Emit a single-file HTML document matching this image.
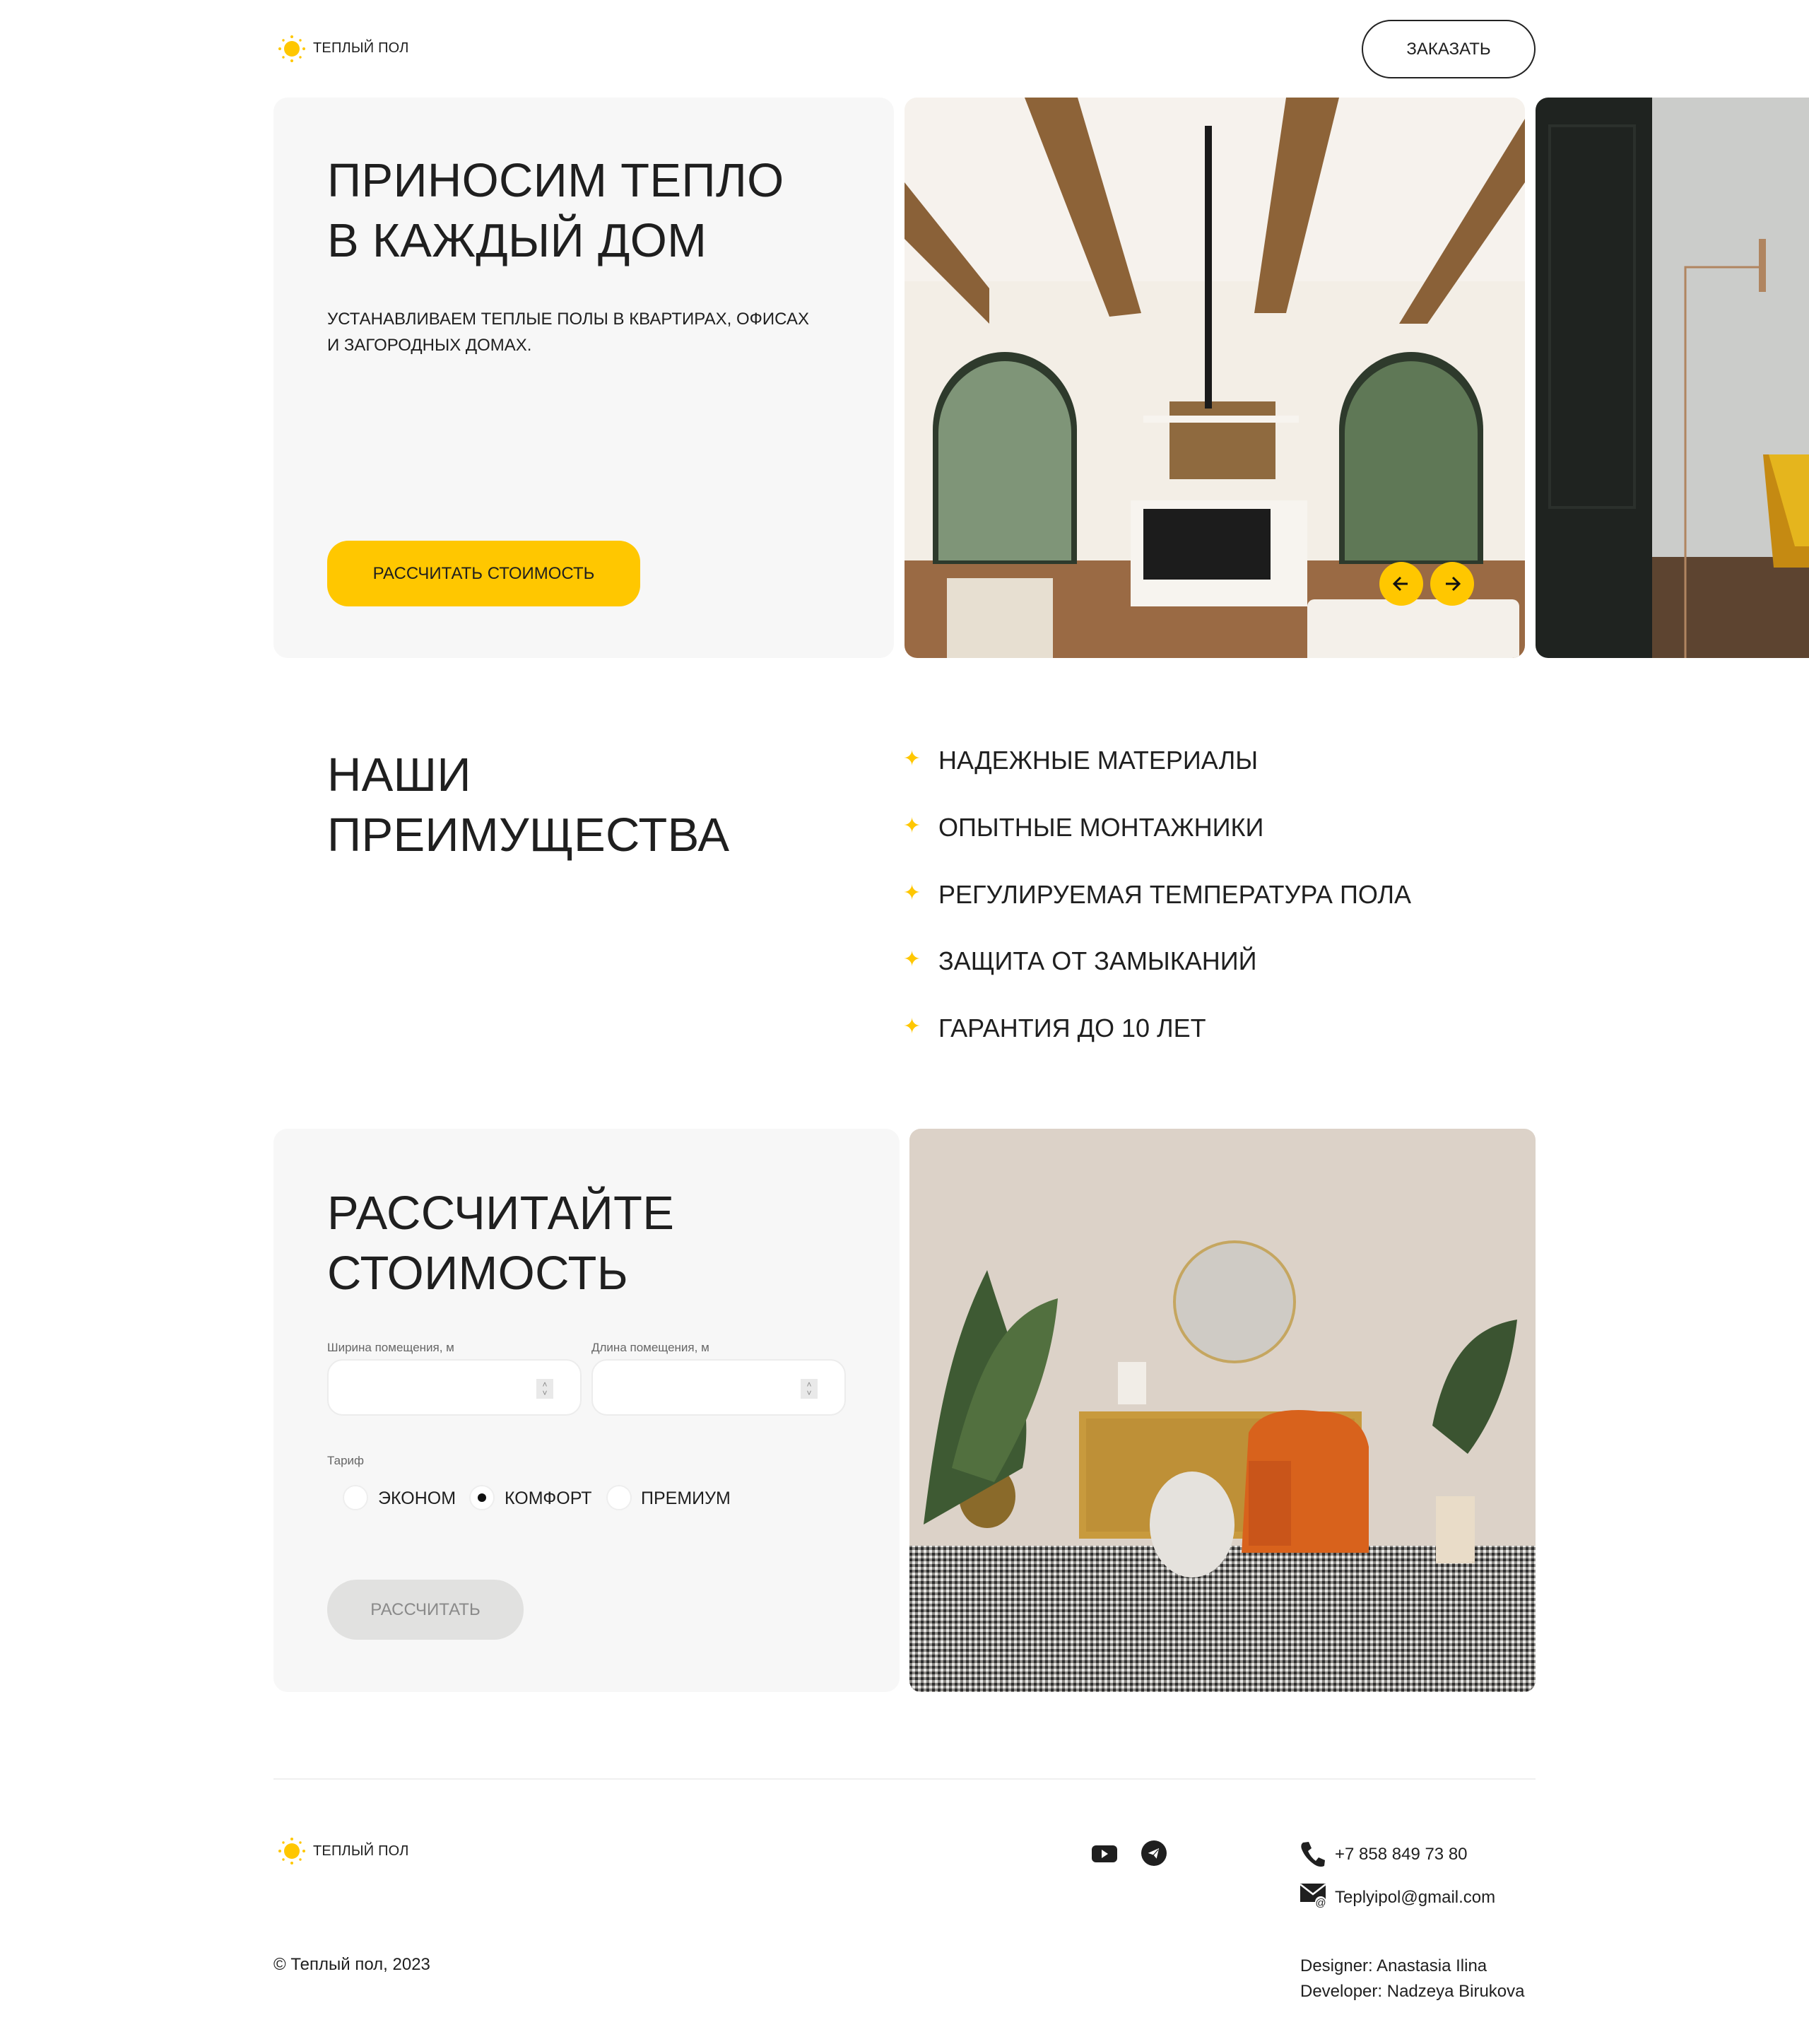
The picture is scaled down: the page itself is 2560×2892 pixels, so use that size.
<!DOCTYPE html>
<html><head><meta charset="utf-8"><style>
*{margin:0;padding:0;box-sizing:border-box}
body{width:2560px;height:2892px;background:#fff;font-family:"Liberation Sans",Arial,sans-serif;color:#1f1f1f;position:relative;overflow:hidden}
.a{position:absolute}
.logo{font-size:20px;letter-spacing:.2px}
h1,h2{font-weight:400;font-size:67px;line-height:85px;letter-spacing:.3px;position:absolute;color:#1f1f1f}
.card{background:#f7f7f7;border-radius:20px}
.li{font-size:36px;letter-spacing:0}
.star{color:#ffc700;font-size:30px}
.lab{font-size:17px;color:#666}
.inp{background:#fff;border:2px solid #ececec;border-radius:22px;width:360px;height:80px}
.spin{position:absolute;right:38px;top:26px;width:24px;height:28px;background:#e9e9e9;font-size:12px;line-height:12px;text-align:center;color:#888;padding-top:2px}
.rad{width:36px;height:36px;border-radius:50%;background:#fff;border:2px solid #eee}
.rt{font-size:25px}
.ft{font-size:24px}
</style></head><body>

<svg class="a" style="left:393px;top:49px" width="40" height="40" viewBox="0 0 40 40"><circle cx="20" cy="20" r="11" fill="#ffc700"/><g fill="#ffc700"><circle cx="20" cy="3" r="2"/><circle cx="20" cy="37" r="2"/><circle cx="3" cy="20" r="2"/><circle cx="37" cy="20" r="2"/><circle cx="8" cy="8" r="1.7"/><circle cx="32" cy="8" r="1.7"/><circle cx="8" cy="32" r="1.7"/><circle cx="32" cy="32" r="1.7"/></g></svg>
<div class="a logo" style="left:443px;top:57px">ТЕПЛЫЙ ПОЛ</div>
<div class="a" style="left:1927px;top:28px;width:246px;height:83px;border:2px solid #222;border-radius:42px;font-size:24px;text-align:center;line-height:79px">ЗАКАЗАТЬ</div>

<div class="a card" style="left:387px;top:138px;width:878px;height:793px"></div>
<h1 style="left:463px;top:213px">ПРИНОСИМ ТЕПЛО<br>В КАЖДЫЙ ДОМ</h1>
<div class="a" style="left:463px;top:433px;font-size:24px;line-height:37px">УСТАНАВЛИВАЕМ ТЕПЛЫЕ ПОЛЫ В КВАРТИРАХ, ОФИСАХ<br>И ЗАГОРОДНЫХ ДОМАХ.</div>
<div class="a" style="left:463px;top:765px;width:443px;height:93px;background:#ffc700;border-radius:30px;font-size:24px;text-align:center;line-height:93px">РАССЧИТАТЬ СТОИМОСТЬ</div>

<svg class="a" style="left:1280px;top:138px;border-radius:18px" width="878" height="793" viewBox="0 0 878 793">
<rect width="878" height="793" fill="#f3eee6"/>
<rect y="0" width="878" height="260" fill="#f6f2ed"/>
<rect y="655" width="878" height="138" fill="#9a6a44"/>
<polygon points="0,120 120,270 120,320 0,200" fill="#8a6138"/>
<polygon points="170,0 245,0 335,305 290,310" fill="#8d6338"/>
<polygon points="540,0 615,0 540,305 495,305" fill="#8d6338"/>
<polygon points="878,30 878,120 740,320 700,320" fill="#8a6138"/>
<path d="M40,660 L40,470 A102,110 0 0 1 244,470 L244,660Z" fill="#2e3a2c"/>
<path d="M48,655 L48,475 A94,102 0 0 1 236,475 L236,655Z" fill="#7f9578"/>
<path d="M615,660 L615,470 A102,110 0 0 1 819,470 L819,660Z" fill="#2e3a2c"/>
<path d="M623,655 L623,475 A94,102 0 0 1 811,475 L811,655Z" fill="#5f7856"/>
<rect x="375" y="430" width="150" height="110" fill="#8f6a3f"/>
<rect x="425" y="40" width="10" height="400" fill="#1a1a1a"/>
<rect x="320" y="570" width="250" height="150" fill="#f7f4ef"/>
<rect x="338" y="450" width="220" height="10" fill="#f7f4ef"/>
<rect x="338" y="582" width="180" height="100" fill="#1c1c1c"/>
<rect x="570" y="710" width="300" height="190" rx="10" fill="#f4f0ea"/>
<rect x="60" y="680" width="150" height="170" fill="#e7dfd1"/>
<rect x="80" y="830" width="560" height="140" fill="#dcd6cc" opacity=".8"/>
<circle cx="703" cy="688" r="31" fill="#ffc700"/><circle cx="775" cy="688" r="31" fill="#ffc700"/>
<path d="M712,688h-18m8,-9l-9,9l9,9" stroke="#111" stroke-width="3" fill="none"/>
<path d="M766,688h18m-8,-9l9,9l-9,9" stroke="#111" stroke-width="3" fill="none"/>
</svg>
<svg class="a" style="left:2173px;top:138px;border-radius:18px 0 0 18px" width="387" height="793" viewBox="0 0 387 793">
<rect width="387" height="793" fill="#cbccca"/>
<rect x="165" y="650" width="222" height="143" fill="#5d4430"/>
<rect width="165" height="793" fill="#1f2320"/>
<rect x="20" y="40" width="120" height="540" fill="none" stroke="#2b302c" stroke-width="4"/>
<path d="M212,810 V240 h110 v-30" stroke="#b08560" stroke-width="3" fill="none"/>
<rect x="316" y="200" width="10" height="75" fill="#b08560"/>
<path d="M322,505 h65 v160 h-50 Z" fill="#c58a12"/>
<path d="M330,505 h57 v130 h-20 Z" fill="#e5b51d"/>
</svg>

<h2 style="left:463px;top:1054px">НАШИ<br>ПРЕИМУЩЕСТВА</h2>
<div class="a star" style="left:1278px;top:1056px">✦</div><div class="a li" style="left:1328px;top:1055px">НАДЕЖНЫЕ МАТЕРИАЛЫ</div>
<div class="a star" style="left:1278px;top:1151px">✦</div><div class="a li" style="left:1328px;top:1150px">ОПЫТНЫЕ МОНТАЖНИКИ</div>
<div class="a star" style="left:1278px;top:1246px">✦</div><div class="a li" style="left:1328px;top:1245px">РЕГУЛИРУЕМАЯ ТЕМПЕРАТУРА ПОЛА</div>
<div class="a star" style="left:1278px;top:1340px">✦</div><div class="a li" style="left:1328px;top:1339px">ЗАЩИТА ОТ ЗАМЫКАНИЙ</div>
<div class="a star" style="left:1278px;top:1435px">✦</div><div class="a li" style="left:1328px;top:1434px">ГАРАНТИЯ ДО 10 ЛЕТ</div>

<div class="a card" style="left:387px;top:1597px;width:886px;height:797px"></div>
<h2 style="left:463px;top:1674px">РАССЧИТАЙТЕ<br>СТОИМОСТЬ</h2>
<div class="a lab" style="left:463px;top:1897px">Ширина помещения, м</div>
<div class="a lab" style="left:837px;top:1897px">Длина помещения, м</div>
<div class="a inp" style="left:463px;top:1923px"><div class="spin">˄<br>˅</div></div>
<div class="a inp" style="left:837px;top:1923px"><div class="spin">˄<br>˅</div></div>
<div class="a lab" style="left:463px;top:2057px">Тариф</div>
<div class="a rad" style="left:485px;top:2101px"></div><div class="a rt" style="left:535px;top:2106px">ЭКОНОМ</div>
<div class="a rad" style="left:664px;top:2101px"><div style="width:12px;height:12px;border-radius:50%;background:#111;margin:10px"></div></div><div class="a rt" style="left:714px;top:2106px">КОМФОРТ</div>
<div class="a rad" style="left:858px;top:2101px"></div><div class="a rt" style="left:907px;top:2106px">ПРЕМИУМ</div>
<div class="a" style="left:463px;top:2235px;width:278px;height:85px;background:#e1e1e0;border-radius:42px;font-size:24px;color:#8a8a8a;text-align:center;line-height:85px">РАССЧИТАТЬ</div>

<svg class="a" style="left:1287px;top:1597px;border-radius:16px" width="886" height="797" viewBox="0 0 886 797">
<rect width="886" height="797" fill="#dcd2c8"/>
<rect y="590" width="886" height="207" fill="#8c8a86"/>
<rect y="590" width="886" height="207" fill="url(#p)"/>
<defs><pattern id="p" width="8" height="8" patternUnits="userSpaceOnUse"><rect width="4" height="4" fill="#2e2e2e"/><rect x="4" y="4" width="4" height="4" fill="#e8e8e6"/></pattern></defs>
<circle cx="460" cy="245" r="85" fill="#cfcbc5" stroke="#c5a660" stroke-width="4"/>
<rect x="240" y="400" width="400" height="180" fill="#c89a3d"/>
<rect x="250" y="410" width="380" height="160" fill="#b78a34" opacity=".6"/>
<ellipse cx="400" cy="560" rx="60" ry="75" fill="#e5e2dd"/>
<path d="M480,430 q20,-40 100,-30 q60,0 70,50 v150 h-180 Z" fill="#d8621c"/>
<path d="M480,470 h60 v120 h-60 Z" fill="#c9551a"/>
<ellipse cx="110" cy="520" rx="40" ry="45" fill="#8a6a2a"/>
<path d="M20,560 C40,400 60,300 110,200 C140,300 180,380 160,480 Z" fill="#3e5a33"/>
<path d="M60,480 C100,320 140,260 210,240 C200,350 160,430 120,500 Z" fill="#52703f"/>
<path d="M740,420 C760,320 800,280 860,270 C850,360 820,420 790,460 Z" fill="#3b5431"/>
<rect x="745" y="520" width="55" height="95" fill="#e9dcc8"/>
<rect x="295" y="330" width="40" height="60" fill="#f1ede7"/>
</svg>

<div class="a" style="left:387px;top:2516px;width:1786px;height:2px;background:#f0f0f0"></div>
<svg class="a" style="left:393px;top:2599px" width="40" height="40" viewBox="0 0 40 40"><circle cx="20" cy="20" r="11" fill="#ffc700"/><g fill="#ffc700"><circle cx="20" cy="3" r="2"/><circle cx="20" cy="37" r="2"/><circle cx="3" cy="20" r="2"/><circle cx="37" cy="20" r="2"/><circle cx="8" cy="8" r="1.7"/><circle cx="32" cy="8" r="1.7"/><circle cx="8" cy="32" r="1.7"/><circle cx="32" cy="32" r="1.7"/></g></svg>
<div class="a logo" style="left:443px;top:2608px">ТЕПЛЫЙ ПОЛ</div>
<svg class="a" style="left:1544px;top:2608px" width="38" height="30" viewBox="0 0 38 30"><rect x="1" y="3" width="36" height="24" rx="6" fill="#1f1f1f"/><path d="M15,9 l9,6 l-9,6Z" fill="#fff"/></svg>
<svg class="a" style="left:1614px;top:2603px" width="38" height="38" viewBox="0 0 38 38"><circle cx="19" cy="19" r="18" fill="#1f1f1f"/><path d="M9,19 L27,11 L23,28 L18,22 Z M18,22 L25,14" fill="#fff" stroke="#1f1f1f" stroke-width="1.2"/></svg>
<svg class="a" style="left:1840px;top:2604px" width="36" height="38" viewBox="0 0 36 38"><path d="M4,3 l8,-1 l4,9 l-5,4 q4,9 11,14 l4,-5 l9,4 l-1,8 q-6,3 -14,-2 q-13,-9 -18,-22 q-2,-6 2,-9Z" fill="#1f1f1f"/></svg>
<div class="a ft" style="left:1889px;top:2610px">+7 858 849 73 80</div>
<svg class="a" style="left:1840px;top:2665px" width="38" height="34" viewBox="0 0 38 34"><rect x="0" y="0" width="36" height="26" fill="#1f1f1f"/><path d="M0,1 L18,15 L36,1" stroke="#fff" stroke-width="2.5" fill="none"/><circle cx="29" cy="26" r="8" fill="#fff"/><text x="29" y="32" font-size="15" text-anchor="middle" fill="#1f1f1f" font-family="Liberation Sans">@</text></svg>
<div class="a ft" style="left:1889px;top:2671px">Teplyipol@gmail.com</div>
<div class="a ft" style="left:387px;top:2766px">© Теплый пол, 2023</div>
<div class="a ft" style="left:1840px;top:2764px;line-height:36px">Designer: Anastasia Ilina<br>Developer: Nadzeya Birukova</div>
</body></html>
